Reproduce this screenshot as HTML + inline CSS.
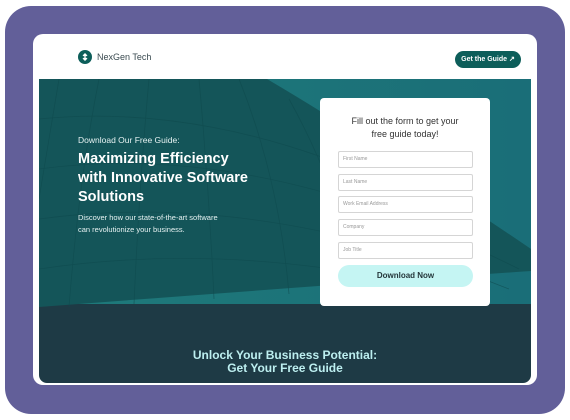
<!DOCTYPE html>
<html><head><meta charset="utf-8"><style>
*{margin:0;padding:0;box-sizing:border-box}
body{width:570px;height:420px;background:#fff;position:relative;overflow:hidden;font-family:"Liberation Sans",sans-serif}
.outer{position:absolute;left:5px;top:6px;width:560px;height:408px;background:#625f99;border-radius:26px}
.card{position:absolute;left:33px;top:34px;width:504px;height:351px;background:#fff;border-radius:10px}
.logo{position:absolute;left:78px;top:50px;width:14px;height:14px;border-radius:50%;background:#0d5e5a}
.brand{position:absolute;left:97px;top:52px;font-size:9px;color:#3a4a50}
.btn{position:absolute;left:455px;top:51px;width:66px;height:17px;border-radius:9px;background:#0d5e5a;color:#fff;font-size:7px;font-weight:bold;text-align:center;line-height:17px}
.hero{position:absolute;left:39px;top:79px;width:492px;height:304px;border-radius:0 0 8px 8px;overflow:hidden;background:#1e3a45}
.t{position:absolute;color:#fff}
.form{position:absolute;left:320px;top:98px;width:170px;height:208px;background:#fff;border-radius:4px}
.ft{position:absolute;left:0;width:170px;top:17px;text-align:center;font-size:9px;line-height:13px;color:#333}
.in{position:absolute;left:18px;width:135px;height:17px;border:1px solid #d5d5d5;border-radius:2px;font-size:5px;color:#999;padding-left:4px;line-height:15px}
.dl{position:absolute;left:18px;top:167px;width:135px;height:22px;border-radius:11px;background:#c5f5f3;font-size:8px;font-weight:bold;color:#24363a;text-align:center;line-height:22px}
</style></head><body>
<div class="outer"></div>
<div class="card"></div>
<div class="logo"><svg width="14" height="14"><path d="M7 3 L9.5 5.5 L7 7 L4.5 5.5Z M7 7 L9.5 8.5 L7 11 L4.5 8.5Z" fill="#fff"/></svg></div>
<div class="brand">NexGen Tech</div>
<div class="btn">Get the Guide ↗</div>
<div class="hero">
<svg width="492" height="304" style="position:absolute;left:0;top:0">
<defs><linearGradient id="g" x1="0" y1="0" x2="1" y2="0"><stop offset="0" stop-color="#1f7a7a"/><stop offset="1" stop-color="#1a6e78"/></linearGradient></defs>
<rect width="492" height="225" fill="url(#g)"/>
<path d="M0 0 L228 0 Q330 60 492 170 L492 192 Q300 205 0 228Z" fill="#145559"/>
<g stroke="#0f4a4e" stroke-width="0.8" fill="none" opacity="0.6">
<path d="M20 0 L0 120"/><path d="M60 0 Q40 100 30 228"/><path d="M110 0 Q100 110 95 225"/><path d="M160 0 Q170 110 175 220"/><path d="M200 0 Q240 100 250 215"/><path d="M250 20 Q300 110 320 208"/><path d="M300 50 Q350 130 380 205"/><path d="M360 90 Q410 150 440 200"/>
<path d="M0 40 Q200 20 420 140"/><path d="M0 90 Q220 60 480 190"/><path d="M0 140 Q220 110 470 210"/><path d="M0 190 Q200 160 420 215"/>
</g>
</svg>
<div class="t" style="left:39px;top:56px;font-size:8.5px;color:#e6f2f2">Download Our Free Guide:</div>
<div class="t" style="left:39px;top:71px;font-size:14.5px;font-weight:bold;line-height:19px">Maximizing Efficiency<br>with Innovative Software<br>Solutions</div>
<div class="t" style="left:39px;top:133px;font-size:7.5px;line-height:12px;color:#e6f2f2">Discover how our state-of-the-art software<br>can revolutionize your business.</div>
<div class="t" style="left:0;width:492px;text-align:center;top:270px;font-size:12px;font-weight:bold;line-height:13px;color:#bdeff0">Unlock Your Business Potential:<br>Get Your Free Guide</div>
</div>
<div class="form">
<div class="ft">Fill out the form to get your<br>free guide today!</div>
<div class="in" style="top:53px">First Name</div>
<div class="in" style="top:76px">Last Name</div>
<div class="in" style="top:98px">Work Email Address</div>
<div class="in" style="top:121px">Company</div>
<div class="in" style="top:144px">Job Title</div>
<div class="dl">Download Now</div>
</div>
</body></html>
